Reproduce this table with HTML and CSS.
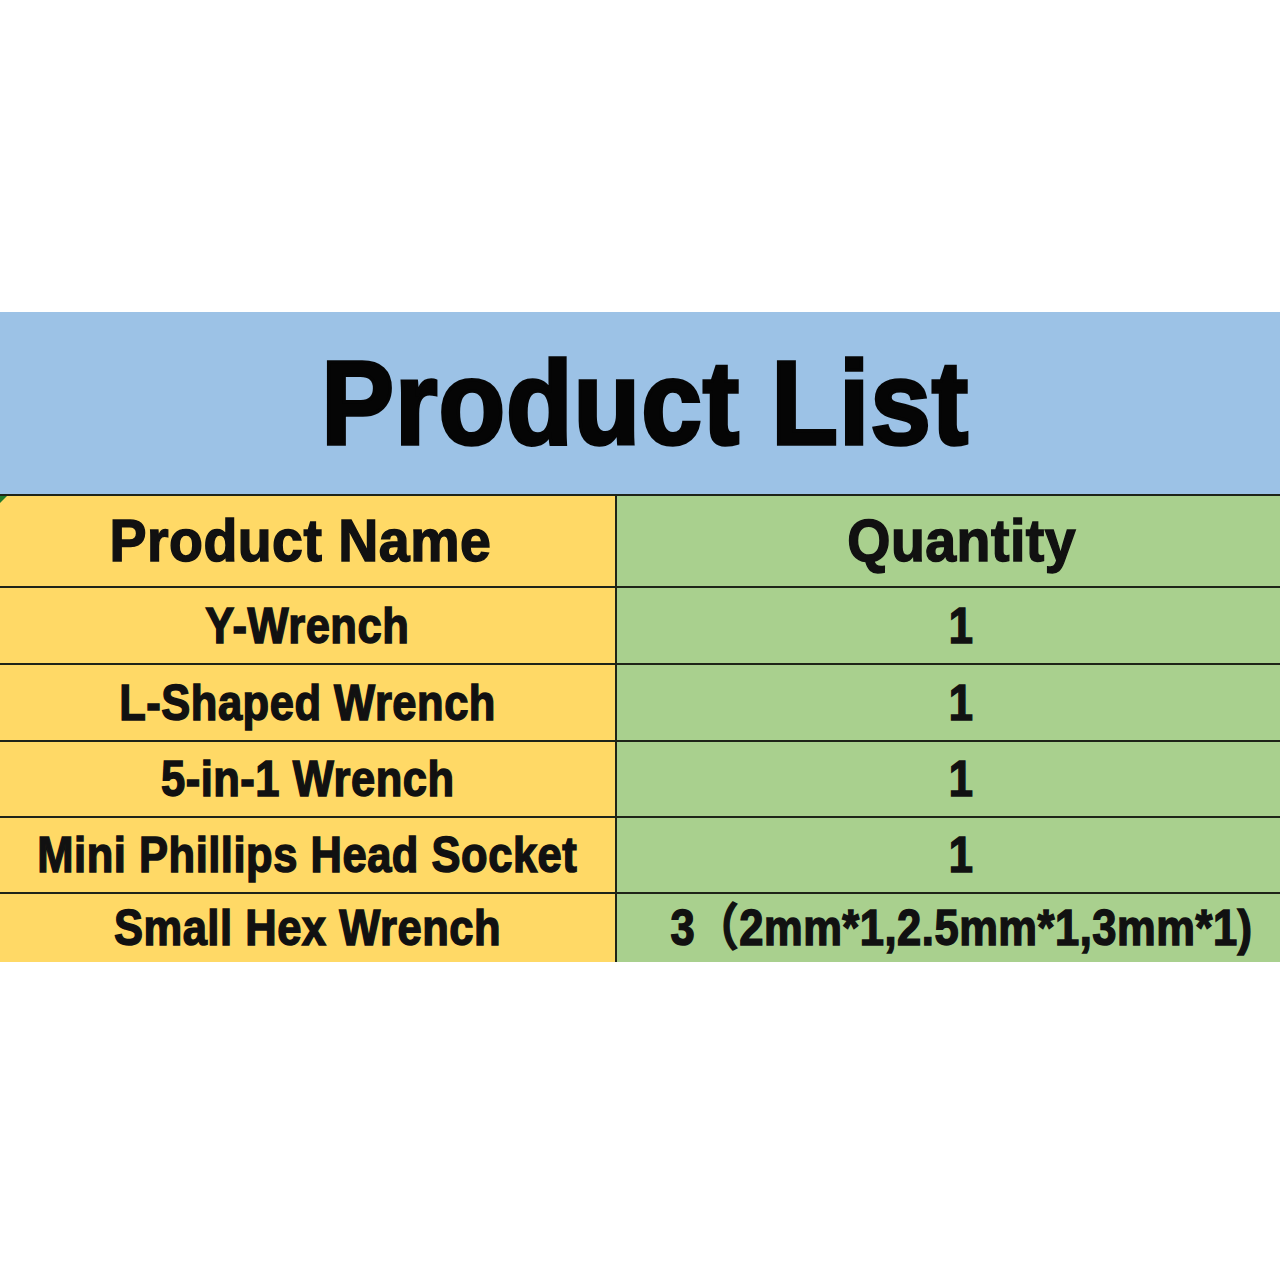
FILE: index.html
```html
<!DOCTYPE html>
<html lang="en">
<head>
<meta charset="utf-8">
<title>Product List</title>
<link rel="stylesheet" href="styles.css">
</head>
<body>
<div class="page">
  <div class="top-space"></div>
  <div class="banner"><h1 class="title"><span class="sx-title">Product List</span></h1></div>
  <div class="table">
    <div class="cell name head"><span class="sx-head">Product Name</span></div>
    <div class="cell qty head"><span class="sx-head">Quantity</span></div>
    <div class="cell name"><span class="sx-row">Y-Wrench</span></div>
    <div class="cell qty"><span class="sx-row">1</span></div>
    <div class="cell name"><span class="sx-row">L-Shaped Wrench</span></div>
    <div class="cell qty"><span class="sx-row">1</span></div>
    <div class="cell name"><span class="sx-row">5-in-1 Wrench</span></div>
    <div class="cell qty"><span class="sx-row">1</span></div>
    <div class="cell name"><span class="sx-row">Mini Phillips Head Socket</span></div>
    <div class="cell qty"><span class="sx-row">1</span></div>
    <div class="cell name"><span class="sx-row">Small Hex Wrench</span></div>
    <div class="cell qty"><span class="sx-row">3（2mm*1,2.5mm*1,3mm*1)</span></div>
  </div>
</div>
</body>
</html>
```
FILE: styles.css
```css
html, body {
  margin: 0;
  padding: 0;
  background: #ffffff;
}
body {
  font-family: "Liberation Sans", Arial, "Noto Sans CJK SC", sans-serif;
  font-weight: bold;
  color: #111111;
}
.page {
  width: 1280px;
  height: 1280px;
  display: flex;
  flex-direction: column;
  background: #ffffff;
}
.top-space {
  height: 312px;
  flex: none;
}
.banner {
  height: 182px;
  flex: none;
  background: #9cc2e6;
  display: flex;
  align-items: center;
  justify-content: center;
  padding-left: 10px;
  box-sizing: border-box;
}
.title {
  margin: 0;
  font-size: 118px;
  line-height: 1;
  font-weight: bold;
  color: #050505;
  letter-spacing: 1px;
  -webkit-text-stroke: 3.5px #050505;
}
.sx-title {
  display: inline-block;
  transform: scaleX(0.925);
}
.table {
  position: relative;
  display: grid;
  grid-template-columns: 615px 1fr;
  grid-template-rows: 90px 75px 75px 74px 74px 68px;
  column-gap: 2px;
  row-gap: 2px;
  padding-top: 2px;
  background: #1e2418;
  flex: none;
}
.table::before {
  content: "";
  position: absolute;
  left: 0;
  top: 2px;
  width: 0;
  height: 0;
  border-top: 7px solid #1f7a2a;
  border-right: 7px solid transparent;
}
.cell {
  display: flex;
  align-items: center;
  justify-content: center;
  white-space: nowrap;
  line-height: 1;
}
.name {
  background: #ffd966;
}
.qty {
  background: #a9d08e;
  padding-left: 10px;
}
.head {
  font-size: 60px;
  letter-spacing: 0.5px;
  -webkit-text-stroke: 1.5px #111111;
}
.name.head {
  padding-right: 14px;
}
.sx-head {
  display: inline-block;
  transform: scaleX(0.925);
}
.cell:not(.head) {
  font-size: 50px;
  letter-spacing: 0.6px;
  -webkit-text-stroke: 1.5px #111111;
}
.sx-row {
  display: inline-block;
  transform: scaleX(0.87);
}
```
